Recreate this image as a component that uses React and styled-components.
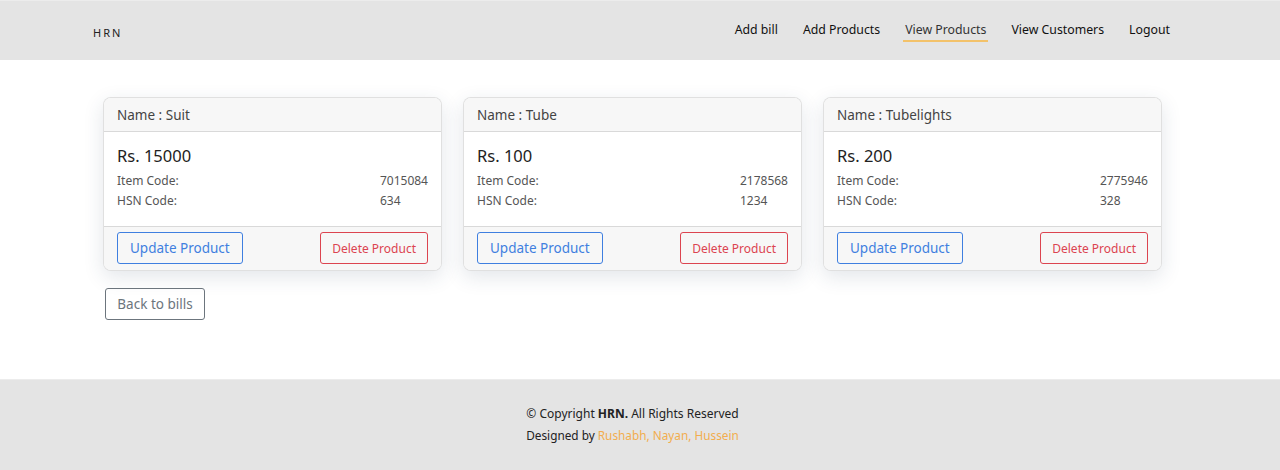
import React from 'react'
import styled, { createGlobalStyle } from 'styled-components';

const GlobalStyle = createGlobalStyle`
  * { box-sizing: border-box; }
  body {
    margin: 0;
    font-family: "Noto Sans", "Open Sans", sans-serif;
    color: #212529;
    background: #fff;
  }
`;

const products = [
  { name: 'Suit', price: 15000, itemCode: '7015084', hsn: '634' },
  { name: 'Tube', price: 100, itemCode: '2178568', hsn: '1234' },
  { name: 'Tubelights', price: 200, itemCode: '2775946', hsn: '328' },
];

const navLinks = ['Add bill', 'Add Products', 'View Products', 'View Customers', 'Logout'];

const Header = styled.header`
  height: 60px;
  background: #e4e4e4;
  border-top: 1px solid #ececec;
  display: flex;
  align-items: center;
  justify-content: space-between;
  padding: 0 108px 0 93px;
`;

const Brand = styled.div`
  font-size: 11px;
  letter-spacing: 2px;
  color: #222;
  padding-top: 4px;
`;

const Nav = styled.nav`
  display: flex;
  gap: 21px;
`;

const NavLink = styled.a`
  font-size: 12.3px;
  line-height: 16px;
  color: ${(p) => (p.$active ? '#333' : '#111')};
  padding: 3px 2px 2px;
  border-bottom: 2px solid ${(p) => (p.$active ? '#f3c26a' : 'transparent')};
  text-decoration: none;
  cursor: pointer;
`;

const Main = styled.main`
  padding: 37px 0 59px 103px;
`;

const Grid = styled.div`
  display: grid;
  grid-template-columns: repeat(3, 339px);
  gap: 21px;
`;

const Card = styled.div`
  border: 1px solid rgba(0, 0, 0, 0.12);
  border-radius: 8px;
  box-shadow: 0 6px 20px rgba(40, 60, 90, 0.13);
  overflow: hidden;
  background: #fff;
`;

const CardHeader = styled.div`
  height: 34px;
  background: #f7f7f7;
  border-bottom: 1px solid rgba(0, 0, 0, 0.12);
  padding: 0 13px;
  display: flex;
  align-items: center;
  font-size: 13.5px;
  color: #444;
`;

const CardBody = styled.div`
  padding: 12px 13px 15px;
`;

const Price = styled.div`
  font-size: 16.5px;
  line-height: 24px;
  color: #222;
  margin-bottom: 3px;
`;

const Details = styled.div`
  display: grid;
  grid-template-columns: 1fr auto;
  font-size: 12px;
  color: #555;
  line-height: 20px;
`;

const CardFooter = styled.div`
  background: #f7f7f7;
  border-top: 1px solid rgba(0, 0, 0, 0.12);
  padding: 5px 13px 6px;
  display: flex;
  justify-content: space-between;
`;

const OutlineButton = styled.button`
  font-family: inherit;
  background: transparent;
  height: 32px;
  border-radius: 3px;
  border: 1px solid ${(p) => p.$color};
  color: ${(p) => p.$color};
  font-size: ${(p) => p.$size || '13px'};
  padding: 0 ${(p) => p.$pad || '10px'};
  cursor: pointer;
`;

const BackButton = styled(OutlineButton)`
  margin-top: 17px;
  margin-left: 2px;
  width: 100px;
`;

const Footer = styled.footer`
  background: #e4e4e4;
  border-top: 1px solid #ececec;
  height: 100px;
  padding: 25px 15px 0 0;
  text-align: center;
  color: #222;
`;

const FooterLine = styled.div`
  font-size: ${(p) => p.$size};
  margin-bottom: 5px;
`;

const Designers = styled.span`
  color: #f2ad4e;
`;

export default function App() {
  return (
    <>
      <GlobalStyle />
      <Header>
        <Brand>HRN</Brand>
        <Nav>
          {navLinks.map((l) => (
            <NavLink key={l} $active={l === 'View Products'}>{l}</NavLink>
          ))}
        </Nav>
      </Header>
      <Main>
        <Grid>
          {products.map((p) => (
            <Card key={p.name}>
              <CardHeader>Name : {p.name}</CardHeader>
              <CardBody>
                <Price>Rs. {p.price}</Price>
                <Details>
                  <span>Item Code:</span><span>{p.itemCode}</span>
                  <span>HSN Code:</span><span>{p.hsn}</span>
                </Details>
              </CardBody>
              <CardFooter>
                <OutlineButton $color="#3f7fe0" $size="13.5px" $pad="12px">Update Product</OutlineButton>
                <OutlineButton $color="#dc4450" $size="12px" $pad="11px">Delete Product</OutlineButton>
              </CardFooter>
            </Card>
          ))}
        </Grid>
        <BackButton $color="#6c757d" $size="13.5px">Back to bills</BackButton>
      </Main>
      <Footer>
        <FooterLine $size="12px">© Copyright <b>HRN.</b> All Rights Reserved</FooterLine>
        <FooterLine $size="11.8px">Designed by <Designers>Rushabh, Nayan, Hussein</Designers></FooterLine>
      </Footer>
    </>
  );
}
